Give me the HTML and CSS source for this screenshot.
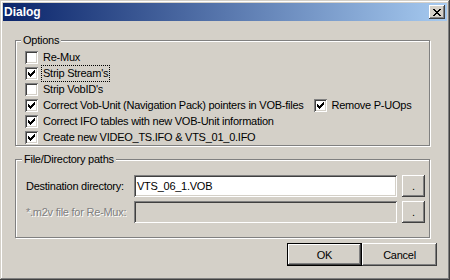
FILE: index.html
```html
<!DOCTYPE html>
<html lang="en">
<head>
    <meta charset="UTF-8">
    <title>Dialog</title>
    <link rel="stylesheet" href="styles.css">
</head>
<body>
    <div class="window">
        <div class="titlebar">
            <span class="title">Dialog</span>
            <button class="close">
                <svg width="8" height="7" viewBox="0 0 8 7"><path fill="#000" d="M0 0h2v1H0zM6 0h2v1H6zM1 1h2v1H1zM5 1h2v1H5zM2 2h4v1H2zM3 3h2v1H3zM2 4h4v1H2zM1 5h2v1H1zM5 5h2v1H5zM0 6h2v1H0zM6 6h2v1H6z"/></svg>
            </button>
        </div>
        <div class="client">
            <fieldset class="group options">
                <legend>Options</legend>
                <div class="check"><span class="box"></span><span class="text">Re-Mux</span></div>
                <div class="check"><span class="box checked"></span><span class="text focus">Strip Stream's</span></div>
                <div class="check"><span class="box"></span><span class="text">Strip VobID's</span></div>
                <div class="check-row">
                    <div class="check"><span class="box checked"></span><span class="text">Correct Vob-Unit (Navigation Pack) pointers in VOB-files</span></div>
                    <div class="check extra"><span class="box checked"></span><span class="text">Remove P-UOps</span></div>
                </div>
                <div class="check"><span class="box checked"></span><span class="text">Correct IFO tables with new VOB-Unit information</span></div>
                <div class="check"><span class="box checked"></span><span class="text">Create new VIDEO_TS.IFO &amp; VTS_01_0.IFO</span></div>
            </fieldset>
            <fieldset class="group paths">
                <legend>File/Directory paths</legend>
                <div class="path-row">
                    <span class="path-label">Destination directory:</span>
                    <div class="field">VTS_06_1.VOB</div>
                    <button class="browse">.</button>
                </div>
                <div class="path-row">
                    <span class="path-label disabled">*.m2v file for Re-Mux:</span>
                    <div class="field off"></div>
                    <button class="browse">.</button>
                </div>
            </fieldset>
            <div class="actions">
                <button class="btn default">OK</button>
                <button class="btn">Cancel</button>
            </div>
        </div>
    </div>
</body>
</html>
```

FILE: styles.css
```css
* {
    box-sizing: border-box;
}
body {
    margin: 0;
    font-family: "Liberation Sans", Arial, sans-serif;
    font-size: 11px;
    letter-spacing: -0.25px;
    color: #000;
    background-color: #d4d0c8;
}
.window {
    width: 450px;
    height: 280px;
    padding: 3px;
    background-color: #d4d0c8;
    box-shadow: inset -1px -1px #404040, inset 1px 1px #d4d0c8, inset -2px -2px #808080, inset 2px 2px #fff;
}
.titlebar {
    height: 18px;
    display: flex;
    align-items: center;
    justify-content: space-between;
    padding: 0 2px 0 1px;
    background: linear-gradient(to right, #0a246a, #a6caf0);
}
.title {
    color: #fff;
    font-size: 12px;
    font-weight: bold;
    letter-spacing: 0;
}
.close {
    width: 16px;
    height: 14px;
    padding: 0;
    border: none;
    background-color: #d4d0c8;
    box-shadow: inset -1px -1px #404040, inset 1px 1px #fff, inset -2px -2px #808080;
    display: flex;
    align-items: center;
    justify-content: center;
}
.close svg {
    display: block;
}
.client {
    padding: 13px 10px 0 12px;
}
.group {
    margin: 0 7px 0 0;
    border: 1px solid #808080;
    box-shadow: 1px 1px 0 #fff, inset 1px 1px 0 #fff;
    min-width: 0;
}
.group legend {
    padding: 0 2px;
    margin-left: -4px;
    line-height: 13px;
    background-color: #d4d0c8;
}
.options {
    height: 112px;
    padding: 3px 4px 0 9px;
}
.check {
    display: flex;
    align-items: flex-start;
    height: 16px;
}
.check-row {
    display: flex;
}
.extra {
    margin-left: 10px;
}
.box {
    width: 13px;
    height: 13px;
    margin-top: 1px;
    padding: 3px;
    background-color: #fff;
    box-shadow: inset 1px 1px #808080, inset -1px -1px #fff, inset 2px 2px #404040, inset -2px -2px #d4d0c8;
}
.box.checked {
    background-image: url("data:image/svg+xml,%3Csvg xmlns='http://www.w3.org/2000/svg' width='7' height='7'%3E%3Cpath d='M0 2h1v1h1v1h1v-1h1v-1h1v-1h1v-1h1v3h-1v1h-1v1h-1v1h-1v1h-1v-1h-1v-1h-1v-1h-1z'/%3E%3C/svg%3E");
    background-repeat: no-repeat;
    background-position: 3px 3px;
}
.text {
    margin-left: 5px;
    line-height: 15px;
    white-space: nowrap;
}
.text.focus {
    margin: -1px 0 0 3px;
    padding: 0 1px;
    border: 1px dotted #000;
}
.paths {
    height: 85px;
    margin-top: 7px;
    padding: 9px 4px 0 10px;
}
.path-row {
    display: flex;
    height: 22px;
}
.path-row + .path-row {
    margin-top: 4px;
}
.path-label {
    width: 108px;
    line-height: 22px;
    white-space: nowrap;
}
.disabled {
    color: #808080;
    text-shadow: 1px 1px 0 #fff;
}
.field {
    flex: 1;
    padding: 0 3px;
    line-height: 22px;
    background-color: #fff;
    box-shadow: inset 1px 1px #808080, inset -1px -1px #fff, inset 2px 2px #404040, inset -2px -2px #d4d0c8;
}
.field.off {
    background-color: #d4d0c8;
}
.browse, .btn {
    font-family: inherit;
    font-size: 11px;
    letter-spacing: inherit;
    color: #000;
    padding: 0;
    border: none;
    background-color: #d4d0c8;
    box-shadow: inset -1px -1px #404040, inset 1px 1px #fff, inset -2px -2px #808080;
}
.browse {
    width: 23px;
    margin-left: 5px;
}
.actions {
    display: flex;
    justify-content: flex-end;
    margin-top: 5px;
}
.btn {
    width: 75px;
    height: 23px;
}
.btn.default {
    border: 1px solid #000;
}
```
